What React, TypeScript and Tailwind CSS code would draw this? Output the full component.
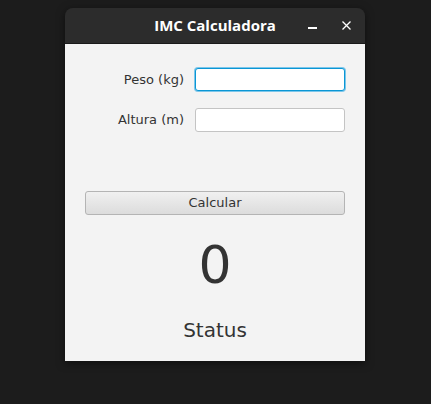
import React from "react";

export default function App() {
  return (
    <div className="w-[431px] h-[404px] bg-[#1c1c1c] relative overflow-hidden" style={{ fontFamily: '"DejaVu Sans", sans-serif' }}>
      <div className="absolute left-[65px] top-[8px] w-[300px] h-[353px] flex flex-col rounded-t-[8px] overflow-hidden shadow-[0_2px_8px_rgba(0,0,0,0.5)]">
        <div className="h-[36px] bg-[#2c2c2c] border-b border-[#1a1a1a] flex items-center relative">
          <div className="w-full text-center text-white text-[15px] font-bold" style={{ fontFamily: '"Open Sans", sans-serif' }}>IMC Calculadora</div>
          <div className="absolute left-[243px] top-[19px] w-[9px] h-[1.5px] bg-white" />
          <svg className="absolute left-[277px] top-[13px]" width="9" height="9" viewBox="0 0 9 9">
            <path d="M0.5 0.5 L8.5 8.5 M8.5 0.5 L0.5 8.5" stroke="white" strokeWidth="1.3" />
          </svg>
        </div>
        <div className="flex-1 bg-[#f3f3f3] flex flex-col">
          <div className="flex items-center mt-[24px] h-[23px]">
            <div className="w-[130px] text-right text-[13px] text-[#333] pr-[11px]">Peso (kg)</div>
            <div className="w-[150px] h-[23px] bg-white border border-[#0a96d4] rounded-[3px] shadow-[0_0_0_1px_#7cc6ea]" />
          </div>
          <div className="flex items-center mt-[17px] h-[24px]">
            <div className="w-[130px] text-right text-[13px] text-[#333] pr-[11px]">Altura (m)</div>
            <div className="w-[150px] h-[24px] bg-white border border-[#c4c4c4] rounded-[3px]" />
          </div>
          <div className="mt-[59px] mx-[20px] h-[24px] rounded-[3px] border border-[#b4b4b4] bg-gradient-to-b from-[#f0f0f0] to-[#dcdcdc] flex items-center justify-center text-[13px] text-[#333]">
            Calcular
          </div>
          <div className="mt-[20px] text-center text-[52px] leading-[60px] text-[#333]">0</div>
          <div className="mt-[23px] text-center text-[20px] leading-[24px] text-[#333]">Status</div>
        </div>
      </div>
    </div>
  );
}
